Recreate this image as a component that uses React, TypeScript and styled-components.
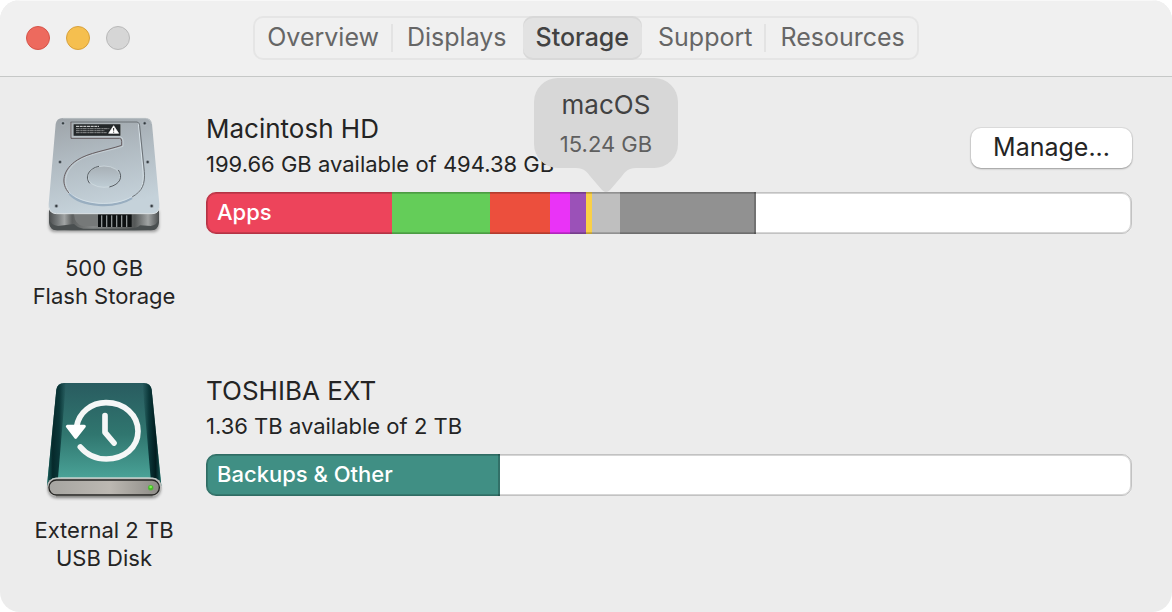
import React from "react";
import styled, { createGlobalStyle } from "styled-components";

const GlobalStyle = createGlobalStyle`
  *, *::before, *::after { box-sizing: border-box; }
  body { margin: 0; background: #ffffff; }
  button { font: inherit; margin: 0; }
`;

const Window = styled.div`
  min-height: 100vh;
  display: flex;
  flex-direction: column;
  border-radius: 20px;
  overflow: hidden;
  background: #ececec;
  color: #242424;
  font-family: Inter, "Liberation Sans", sans-serif;
  font-size: 22px;
`;

const TitleBar = styled.header`
  display: grid;
  grid-template-columns: 1fr auto 1fr;
  align-items: center;
  padding: 16px 26px;
  border-bottom: 1px solid #c6c8c7;
  background: #f0f0f0;
  box-shadow: inset 0 1px #f8f8f8;
`;

const WindowControls = styled.div`
  display: flex;
  gap: 16px;
`;

const ControlDot = styled.button<{ $fill: string; $edge: string }>`
  width: 24px;
  height: 24px;
  padding: 0;
  border: 1px solid ${(p) => p.$edge};
  border-radius: 50%;
  background: ${(p) => p.$fill};
`;

const Tabs = styled.nav`
  display: flex;
  height: 44px;
  border-radius: 10px;
  box-shadow: inset 0 0 0 2px #e5e5e5;
`;

const Tab = styled.button<{ $selected?: boolean; $divided?: boolean }>`
  position: relative;
  margin: ${(p) => (p.$selected ? "0 2px" : "0")};
  padding: ${(p) => (p.$selected ? "0 13px 2px" : "0 14px 2px")};
  border: 0;
  border-radius: 10px;
  background: ${(p) => (p.$selected ? "#e2e2e2" : "transparent")};
  box-shadow: ${(p) => (p.$selected ? "inset 0 2px #d8d8d8, inset 0 -2px #d8d8d8" : "none")};
  color: ${(p) => (p.$selected ? "#424242" : "#666666")};
  font-size: 25px;
  font-weight: ${(p) => (p.$selected ? 500 : 400)};
  line-height: 32px;

  &::after {
    content: "";
    display: ${(p) => (p.$divided ? "block" : "none")};
    position: absolute;
    top: 8px;
    right: 0;
    width: 2px;
    height: 28px;
    background: #e3e3e3;
  }
`;

const Drives = styled.main`
  display: flex;
  flex-direction: column;
  gap: 64px;
  padding: 35px 40px 40px 32px;
`;

const DriveRow = styled.section`
  display: grid;
  grid-template-columns: 144px 1fr;
  column-gap: 30px;
`;

const Device = styled.figure`
  display: flex;
  flex-direction: column;
  align-items: center;
  gap: 14px;
  margin: 0;
`;

const DeviceArt = styled.svg`
  width: 128px;
  height: 128px;
`;

const DeviceLabel = styled.figcaption`
  line-height: 28px;
  text-align: center;
  white-space: nowrap;
`;

const DriveHeader = styled.div`
  display: flex;
  align-items: flex-start;
  justify-content: space-between;
  min-height: 72px;
  margin-bottom: 8px;
`;

const DriveName = styled.h2`
  margin: 0;
  font-size: 26px;
  font-weight: 400;
  line-height: 34px;
`;

const DriveSpace = styled.p`
  margin: 0;
  line-height: 36px;
`;

const ManageButton = styled.button`
  align-self: center;
  height: 40px;
  padding: 0 22px 2px;
  border: 0;
  border-radius: 10px;
  background: #ffffff;
  box-shadow: 0 0 0 1px rgba(0, 0, 0, 0.06), 0 1px 2px rgba(0, 0, 0, 0.3);
  color: #242424;
  font-size: 25px;
  line-height: 36px;
`;

const Bar = styled.div`
  position: relative;
  display: flex;
  height: 42px;
  border-radius: 10px;
  background: #ffffff;

  &::after {
    content: "";
    position: absolute;
    inset: 0;
    border: 1px solid rgba(0, 0, 0, 0.24);
    border-radius: 10px;
    box-shadow: inset 0 0 0 1px rgba(0, 0, 0, 0.16);
    pointer-events: none;
  }
`;

const Segment = styled.div<{ $size: number; $color: string; $last: boolean }>`
  position: relative;
  flex: ${(p) => p.$size} 0 0;
  min-width: 0;
  background: ${(p) => p.$color};
  box-shadow: ${(p) => (p.$last ? "inset -2px 0 rgba(0, 0, 0, 0.21)" : "none")};

  &:first-child { border-radius: 10px 0 0 10px; }
`;

const FreeSpace = styled.div<{ $size: number }>`
  flex: ${(p) => p.$size} 0 0;
`;

const SegmentLabel = styled.span`
  display: block;
  padding-left: 11px;
  color: #ffffff;
  font-weight: 500;
  line-height: 40px;
  white-space: nowrap;
`;

const Tooltip = styled.div`
  position: absolute;
  bottom: 100%;
  left: 50%;
  z-index: 1;
  width: 144px;
  margin-bottom: 24px;
  padding: 8px 0 4px;
  border-radius: 24px;
  background: #d7d7d7;
  text-align: center;
  transform: translateX(-50%);
`;

const TooltipName = styled.div`
  color: #424242;
  font-size: 26px;
  line-height: 38px;
`;

const TooltipSize = styled.div`
  color: #5f5f5f;
  line-height: 40px;
`;

const TooltipTail = styled.svg`
  position: absolute;
  top: 100%;
  left: 50%;
  width: 60px;
  height: 24px;
  transform: translateX(-50%);
`;

const InternalDiskArt = () => (
  <DeviceArt viewBox="30 36 384 384" aria-hidden="true">
    <defs>
      <linearGradient id="plate" x1="0" y1="0" x2="0.25" y2="1">
        <stop offset="0" stopColor="#9da3a8" />
        <stop offset="0.45" stopColor="#b0bac1" />
        <stop offset="1" stopColor="#c5d2da" />
      </linearGradient>
      <linearGradient id="platter" x1="0" y1="0" x2="0" y2="1">
        <stop offset="0" stopColor="#a8b0b6" />
        <stop offset="1" stopColor="#bfcdd5" />
      </linearGradient>
      <linearGradient id="chassis" x1="0" y1="0" x2="1" y2="0">
        <stop offset="0" stopColor="#4b4e4f" />
        <stop offset="0.08" stopColor="#777b7c" />
        <stop offset="0.14" stopColor="#a1a4a4" />
        <stop offset="0.21" stopColor="#5d6060" />
        <stop offset="0.4" stopColor="#858888" />
        <stop offset="0.78" stopColor="#555858" />
        <stop offset="0.9" stopColor="#a1a4a4" />
        <stop offset="1" stopColor="#4b4e4f" />
      </linearGradient>
      <filter id="diskShadow" x="-10%" y="-10%" width="120%" height="120%">
        <feGaussianBlur stdDeviation="4" />
      </filter>
    </defs>
    <path d="M57 334H387V380Q385 396 368 396H76Q59 396 57 380Z" fill="#000" opacity="0.35" filter="url(#diskShadow)" />
    <path d="M57 328H387V366Q385 391 362 391H82Q59 391 57 366Z" fill="url(#chassis)" />
    <path d="M58 360Q64 376 84 378L132 372Q144 384 160 386H290Q322 386 330 376L362 378Q380 376 386 360V368Q384 391 362 391H82Q60 391 58 368Z" fill="#4a4f50" />
    <path d="M132 342H204V378H158Q134 374 132 342Z" fill="#767979" />
    <rect x="204" y="343" width="101" height="38" fill="#0d1011" />
    <g fill="#8e9394">
      <rect x="213" y="346" width="4" height="35" />
      <rect x="228" y="346" width="4" height="35" />
      <rect x="243" y="346" width="4" height="35" />
      <rect x="258" y="346" width="4" height="35" />
      <rect x="273" y="346" width="4" height="35" />
      <rect x="288" y="346" width="4" height="35" />
    </g>
    <path d="M98 54H346Q363 54 366 72L388 312Q391 341 366 341H80Q53 341 56 312L77 72Q80 54 98 54Z" fill="url(#plate)" />
    <path d="M57 322Q60 341 80 341H366Q386 341 388 322" fill="none" stroke="#dce2e5" strokeWidth="3" />
    <path d="M98 55H346Q361 56 365 72" fill="none" stroke="#c6cbce" strokeWidth="2" />
    <path d="M125 67V111H272Q279 112 279 122V139C230 155 176 161 144 183C108 208 95 247 119 277" fill="none" stroke="#d2dbe0" strokeWidth="2" />
    <path d="M325 68L339 214C342 250 336 268 318 284" fill="none" stroke="#d8e2e8" strokeWidth="3" />
    <path d="M122 66H321Q328 66 329 77L343 214C346 252 337 274 306 291" fill="none" stroke="#6a7075" strokeWidth="3" />
    <path d="M123 66V115H269Q275 115 275 124V136C230 151 176 158 142 180C98 208 90 251 118 280" fill="none" stroke="#655c5f" strokeWidth="3" />
    <path d="M118 281C155 321 254 326 306 294" fill="none" stroke="#99aec0" strokeWidth="7" />
    <path d="M117 276C155 316 256 322 307 289" fill="none" stroke="#e0eaf0" strokeWidth="2" />
    <ellipse cx="222" cy="230" rx="49" ry="32" fill="url(#platter)" stroke="#d5dfe4" strokeWidth="2" />
    <path d="M179 250C163 230 177 205 207 199M265 210C280 231 270 253 238 261" fill="none" stroke="#555b60" strokeWidth="3" />
    <rect x="130" y="72" width="142" height="36" rx="2" fill="#24282a" stroke="#d9dddf" strokeWidth="1" />
    <g stroke="#e5e6e6" fill="none">
      <path d="M138 79H207" strokeWidth="3" strokeDasharray="9 2" />
      <path d="M138 86H238M138 92H223M138 98H230" strokeWidth="2" strokeDasharray="11 2 7 1" opacity="0.8" />
    </g>
    <path d="M251 77L266 100H236Z" fill="#fff" stroke="#fff" strokeWidth="2" strokeLinejoin="round" />
    <path d="M251 84V92M251 95V98" stroke="#222" strokeWidth="3" />
    {[[99, 70], [344, 70], [90, 186], [353, 186], [79, 318], [365, 318]].map(([x, y]) => (
      <g key={`${x}-${y}`}>
        <circle cx={x} cy={y} r="6" fill="#7d878e" stroke="#d4dce1" strokeWidth="1" />
        <circle cx={x} cy={y} r="3" fill="#32383c" />
      </g>
    ))}
  </DeviceArt>
);

const BackupDiskArt = () => (
  <DeviceArt viewBox="30 27 384 384" aria-hidden="true">
    <defs>
      <linearGradient id="cover" x1="0" y1="0" x2="0" y2="1">
        <stop offset="0" stopColor="#295c60" />
        <stop offset="0.5" stopColor="#30766f" />
        <stop offset="1" stopColor="#4eaa9e" />
      </linearGradient>
      <linearGradient id="edgeLeft" x1="0" y1="0" x2="1" y2="0">
        <stop offset="0" stopColor="#1b5f5c" />
        <stop offset="0.3" stopColor="#06292b" />
        <stop offset="0.65" stopColor="#0b3739" />
        <stop offset="1" stopColor="#0b3739" stopOpacity="0" />
      </linearGradient>
      <linearGradient id="edgeRight" x1="1" y1="0" x2="0" y2="0">
        <stop offset="0" stopColor="#1b5f5c" />
        <stop offset="0.3" stopColor="#021d20" />
        <stop offset="0.65" stopColor="#0b3739" />
        <stop offset="1" stopColor="#0b3739" stopOpacity="0" />
      </linearGradient>
      <linearGradient id="front" x1="0" y1="0" x2="1" y2="0">
        <stop offset="0" stopColor="#a6a5a1" />
        <stop offset="0.55" stopColor="#bcb8b2" />
        <stop offset="1" stopColor="#8d8b86" />
      </linearGradient>
      <filter id="coverShadow" x="-10%" y="-10%" width="120%" height="120%">
        <feGaussianBlur stdDeviation="4" />
      </filter>
    </defs>
    <rect x="54" y="345" width="338" height="55" rx="26" fill="#000" opacity="0.4" filter="url(#coverShadow)" />
    <path d="M102 54H342Q361 54 365 74L394 362H51L79 74Q83 54 102 54Z" fill="url(#cover)" />
    <path d="M102 54Q83 54 79 74L51 362H82L108 54Z" fill="url(#edgeLeft)" />
    <path d="M342 54Q361 54 365 74L394 362H364L337 54Z" fill="url(#edgeRight)" />
    <rect x="51" y="338" width="344" height="57" rx="27" fill="#b9b9b7" />
    <path d="M66 342Q78 338 92 338H354Q370 338 380 342" fill="none" stroke="#d6e2df" strokeWidth="2" />
    <rect x="57" y="345" width="331" height="45" rx="22" fill="url(#front)" stroke="#252523" strokeWidth="4" />
    <path d="M78 395H368" stroke="#777773" strokeWidth="2" />
    <circle cx="362" cy="368" r="8" fill="#43bb27" stroke="#7d9e6b" strokeWidth="1" />
    <circle cx="362" cy="366" r="4" fill="#79f34e" />
    <path d="M140 184C147 143 183 113 228 113C283 113 324 150 324 199C324 247 283 282 229 282C198 282 170 269 151 246" fill="none" stroke="#f5f7f7" strokeWidth="17" strokeLinecap="round" />
    <path d="M112 184H163L137 217Z" fill="#fff" stroke="#fff" strokeWidth="9" strokeLinejoin="round" />
    <path d="M225 152V202L252 234" fill="none" stroke="#f5f7f7" strokeWidth="17" strokeLinecap="round" strokeLinejoin="round" />
  </DeviceArt>
);

interface Usage {
  id: string;
  size: number;
  color: string;
  label?: string;
  tip?: { name: string; size: string };
}

interface Drive {
  name: string;
  space: string;
  device: [string, string];
  art: React.ReactNode;
  usage: Usage[];
  free: number;
  manageable?: boolean;
}

const drives: Drive[] = [
  {
    name: "Macintosh HD",
    space: "199.66 GB available of 494.38 GB",
    device: ["500 GB", "Flash Storage"],
    art: <InternalDiskArt />,
    manageable: true,
    free: 376,
    usage: [
      { id: "apps", size: 186, color: "#ed445b", label: "Apps" },
      { id: "documents", size: 98, color: "#64cd59" },
      { id: "photos", size: 60, color: "#ec4f3d" },
      { id: "music", size: 20, color: "#ea33f7" },
      { id: "podcasts", size: 16, color: "#9b51b8" },
      { id: "mail", size: 6, color: "#fad047" },
      { id: "macos", size: 28, color: "#bfbfbf", tip: { name: "macOS", size: "15.24 GB" } },
      { id: "system", size: 136, color: "#919191" },
    ],
  },
  {
    name: "TOSHIBA EXT",
    space: "1.36 TB available of 2 TB",
    device: ["External 2 TB", "USB Disk"],
    art: <BackupDiskArt />,
    free: 632,
    usage: [{ id: "backups", size: 294, color: "#408f84", label: "Backups & Other" }],
  },
];

const tabs = [
  { name: "Overview", divided: true },
  { name: "Displays" },
  { name: "Storage", selected: true },
  { name: "Support", divided: true },
  { name: "Resources" },
];

export default function App() {
  return (
    <>
      <GlobalStyle />
      <Window>
        <TitleBar>
          <WindowControls>
            <ControlDot aria-label="Close" $fill="#ed6a5e" $edge="#d65449" />
            <ControlDot aria-label="Minimize" $fill="#f5bf4f" $edge="#d8a13c" />
            <ControlDot aria-label="Zoom" $fill="#d6d6d6" $edge="#b9b9b9" disabled />
          </WindowControls>
          <Tabs>
            {tabs.map((tab) => (
              <Tab
                key={tab.name}
                $selected={tab.selected}
                $divided={tab.divided}
                aria-current={tab.selected ? "page" : undefined}
              >
                {tab.name}
              </Tab>
            ))}
          </Tabs>
        </TitleBar>
        <Drives>
          {drives.map((drive) => (
            <DriveRow key={drive.name}>
              <Device>
                {drive.art}
                <DeviceLabel>
                  {drive.device[0]}
                  <br />
                  {drive.device[1]}
                </DeviceLabel>
              </Device>
              <div>
                <DriveHeader>
                  <div>
                    <DriveName>{drive.name}</DriveName>
                    <DriveSpace>{drive.space}</DriveSpace>
                  </div>
                  {drive.manageable && <ManageButton>Manage...</ManageButton>}
                </DriveHeader>
                <Bar>
                  {drive.usage.map((part, i) => (
                    <Segment
                      key={part.id}
                      $size={part.size}
                      $color={part.color}
                      $last={i === drive.usage.length - 1}
                    >
                      {part.label && <SegmentLabel>{part.label}</SegmentLabel>}
                      {part.tip && (
                        <Tooltip role="tooltip">
                          <TooltipName>{part.tip.name}</TooltipName>
                          <TooltipSize>{part.tip.size}</TooltipSize>
                          <TooltipTail viewBox="0 0 60 24" aria-hidden="true">
                            <path
                              d="M0 0C8 0 11 4 14 8L26 22Q30 26 34 22L46 8C49 4 52 0 60 0Z"
                              fill="#d7d7d7"
                            />
                          </TooltipTail>
                        </Tooltip>
                      )}
                    </Segment>
                  ))}
                  <FreeSpace $size={drive.free} />
                </Bar>
              </div>
            </DriveRow>
          ))}
        </Drives>
      </Window>
    </>
  );
}
